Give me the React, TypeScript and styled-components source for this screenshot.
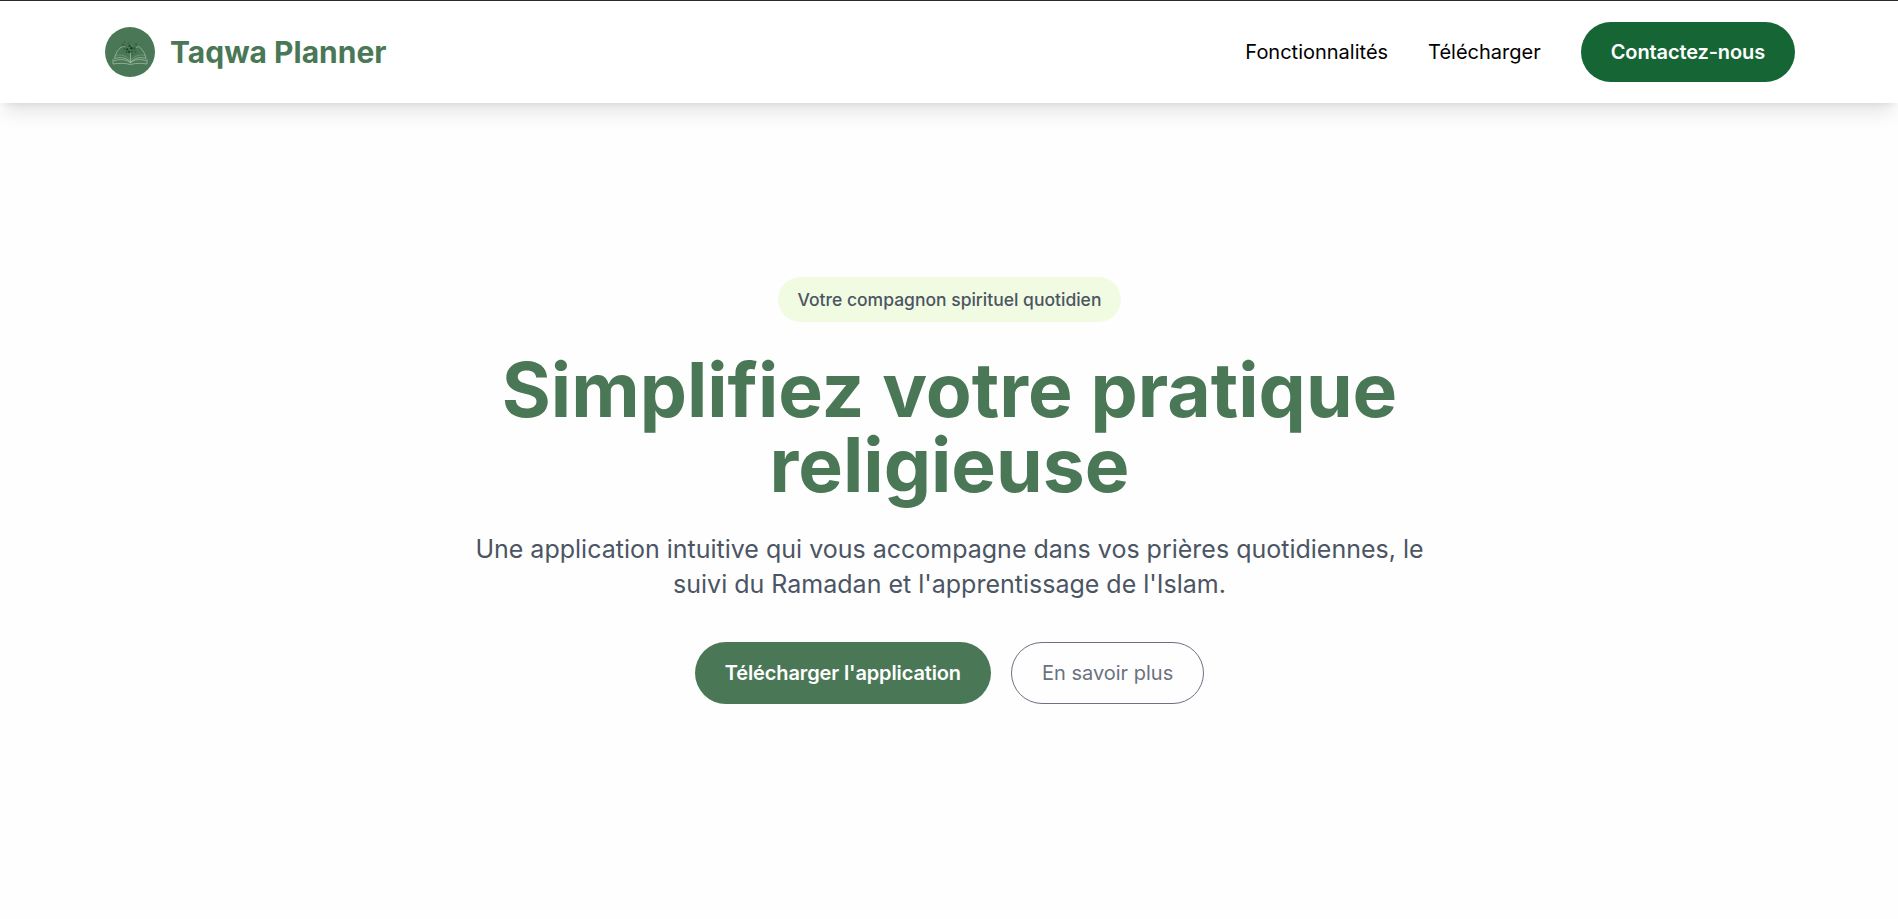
import React from "react";
import styled, { createGlobalStyle } from "styled-components";

const GlobalStyle = createGlobalStyle`
  *, *::before, *::after { box-sizing: border-box; }
  html { font-size: 20px; }
  body {
    margin: 0;
    background: #fefefe;
    color: #000;
    font-family: Inter, "Liberation Sans", sans-serif;
    line-height: 1.5;
    overflow: hidden;
    -webkit-font-smoothing: antialiased;
  }
  h1, p { margin: 0; }
  a { color: inherit; text-decoration: none; }
`;

const Page = styled.div`
  display: flex;
  flex-direction: column;
  height: 919px;
`;

const Header = styled.header`
  display: flex;
  align-items: center;
  justify-content: space-between;
  height: 103px;
  padding: 0 103px 0 105px;
  border-top: 1px solid #2b2a33;
  background: #fff;
  box-shadow: 0 12.5px 18.75px -3.75px rgba(0, 0, 0, 0.1),
    0 5px 7.5px -5px rgba(0, 0, 0, 0.1);
`;

const Brand = styled.a`
  display: flex;
  align-items: center;
  gap: 15px;
  color: #4a7856;
  font-size: 30px;
  font-weight: 700;
`;

const Logo = styled.svg`
  display: block;
  width: 50px;
  height: 50px;
`;

const Nav = styled.nav`
  display: flex;
  align-items: center;
  gap: 40px;
`;

const NavLink = styled.a`
  font-size: 20px;
  line-height: 30px;
`;

const Button = styled.a<{ $variant: "contact" | "primary" | "outline" }>`
  display: flex;
  align-items: center;
  justify-content: center;
  height: ${(p) => (p.$variant === "contact" ? 60 : 62)}px;
  padding: 0 30px;
  border-radius: 31px;
  border: ${(p) => (p.$variant === "outline" ? "1px solid #6b7280" : "0")};
  background: ${(p) =>
    ({ contact: "#166534", primary: "#4a7856", outline: "transparent" })[p.$variant]};
  color: ${(p) => (p.$variant === "outline" ? "#6b7280" : "#fff")};
  font-size: 20px;
  font-weight: ${(p) => (p.$variant === "outline" ? 400 : 600)};
  letter-spacing: ${(p) => (p.$variant === "outline" ? "normal" : "-0.13px")};
  white-space: nowrap;
`;

const Hero = styled.main`
  display: flex;
  flex-direction: column;
  align-items: center;
  padding: 174px 0 0 1px;
  text-align: center;
`;

const Tag = styled.span`
  padding: 10px 20px;
  border-radius: 23px;
  background: #f1fbe2;
  color: #4b5563;
  font-size: 17.5px;
  font-weight: 500;
  line-height: 25px;
`;

const Title = styled.h1`
  width: 960px;
  margin-top: 30px;
  color: #4a7856;
  font-size: 75px;
  font-weight: 700;
  line-height: 75px;
`;

const Lead = styled.p`
  width: 960px;
  margin-top: 30px;
  color: #4b5563;
  font-size: 25px;
  line-height: 35px;
`;

const Actions = styled.div`
  display: flex;
  gap: 20px;
  margin-top: 40px;
`;

const BookLogo = () => (
  <Logo viewBox="0 0 50 50" aria-hidden="true">
    <circle cx="25" cy="25" r="25" fill="#4a7856" />
    <g fill="none" stroke="#d5e3d8" strokeWidth="0.7" strokeLinejoin="round" opacity="0.7">
      <path d="M25.500 35.500C21 30 15 30 9.500 31.500C10.500 27 12 24 14.500 21.500C16.500 19.500 18.500 19 20 20" />
      <path d="M25.500 35.500C30 30 36 30 41 31.500C40 27 38.500 24 36 21.500C34.500 19.500 32.500 19 31 21" />
      <path d="M25.500 36V26.500" />
      <path d="M10 28.500C16 27 22.500 29 25.500 34C28.500 29 35 27 40.500 28.500" opacity="0.5" />
      <path d="M8.500 34C15 31.500 22 32.500 25.500 36C29 32.500 36 31.500 41.500 34" />
      <path d="M8 32V37C14 36 20 36 25.500 37.500C31 36 36 36 42 37V32" />
    </g>
    <g fill="#173d24">
      <circle cx="24.500" cy="19" r="1" />
      <circle cx="22.300" cy="22.300" r="1.100" />
      <circle cx="26.300" cy="21.300" r="1.200" />
      <circle cx="24" cy="24.800" r="1.100" />
      <circle cx="21.500" cy="25" r="0.700" />
      <circle cx="27" cy="24.500" r="0.700" />
      <g opacity="0.35">
        <circle cx="18" cy="18" r="1.500" />
        <circle cx="19.500" cy="15" r="1" />
        <circle cx="23.500" cy="16.500" r="1.100" />
        <circle cx="29" cy="21.500" r="1.700" />
        <circle cx="31" cy="17.500" r="1.200" />
        <circle cx="30.500" cy="25" r="1.200" />
        <circle cx="19.500" cy="22" r="1.200" />
        <circle cx="27.500" cy="27.500" r="1.100" />
      </g>
    </g>
  </Logo>
);

export default function App() {
  return (
    <Page>
      <GlobalStyle />
      <Header>
        <Brand href="#">
          <BookLogo />
          Taqwa Planner
        </Brand>
        <Nav>
          <NavLink href="#features">Fonctionnalités</NavLink>
          <NavLink href="#download">Télécharger</NavLink>
          <Button $variant="contact" href="#contact">Contactez-nous</Button>
        </Nav>
      </Header>
      <Hero>
        <Tag>Votre compagnon spirituel quotidien</Tag>
        <Title>Simplifiez votre pratique religieuse</Title>
        <Lead>
          Une application intuitive qui vous accompagne dans vos prières quotidiennes, le suivi du
          Ramadan et l'apprentissage de l'Islam.
        </Lead>
        <Actions>
          <Button $variant="primary" href="#download">Télécharger l'application</Button>
          <Button $variant="outline" href="#features">En savoir plus</Button>
        </Actions>
      </Hero>
    </Page>
  );
}
